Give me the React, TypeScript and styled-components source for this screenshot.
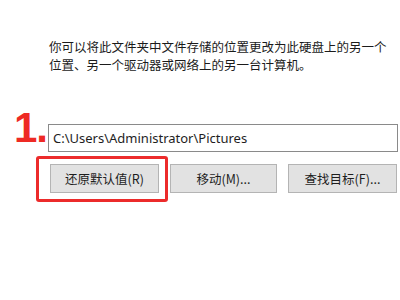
import React from "react";
import styled, { createGlobalStyle } from "styled-components";

const Global = createGlobalStyle`
  html, body { margin: 0; padding: 0; background: #ffffff; }
  body { width: 400px; height: 300px; overflow: hidden; }
`;

const Page = styled.div`
  width: 400px;
  height: 300px;
  box-sizing: border-box;
  padding: 38px 2px 0 0;
  font-family: "Noto Sans CJK SC", "Noto Sans", sans-serif;
  color: #1b1b1b;
`;

const Description = styled.p`
  margin: 0 0 0 49px;
  font-size: 12.5px;
  line-height: 18px;
  letter-spacing: 0;
`;

const Form = styled.div`
  display: grid;
  grid-template-columns: 48px 350px;
  row-gap: 12px;
  margin-top: 50px;
`;

const StepLabel = styled.div`
  display: flex;
  align-items: flex-start;
  justify-content: flex-end;
  padding-right: 1px;
  height: 25px;
  margin-top: -17px;
  color: #ee2a24;
  font-family: "Liberation Sans", "Noto Sans", sans-serif;
  font-weight: 700;
  font-size: 42px;
  line-height: 42px;
  letter-spacing: -1px;
`;

const PathInput = styled.div`
  box-sizing: border-box;
  height: 28px;
  border: 1.5px solid #8a8a8a;
  background: #fff;
  display: flex;
  align-items: center;
  padding-left: 4px;
  font-family: "Noto Sans", "Open Sans", sans-serif;
  font-size: 13px;
  color: #1e1e1e;
`;

const ButtonRow = styled.div`
  grid-column: 2;
  display: flex;
  gap: 11px;
  padding-left: 2px;
`;

const Highlight = styled.div`
  position: relative;
  &::before {
    content: "";
    position: absolute;
    top: -8px;
    left: -14px;
    right: -9px;
    bottom: -9px;
    border: 3px solid #ec2b2b;
    border-radius: 3px;
    pointer-events: none;
  }
`;

const Button = styled.button<{ $w: number }>`
  box-sizing: border-box;
  width: ${(p) => p.$w}px;
  height: 29px;
  margin: 0;
  padding: 0;
  border: 1.5px solid #b4b4b4;
  background: #e2e2e2;
  color: #1e1e1e;
  font-family: "Noto Sans CJK SC", "Noto Sans", sans-serif;
  font-size: 12.5px;
  display: flex;
  align-items: center;
  justify-content: center;
`;

export default function App() {
  return (
    <Page>
      <Global />
      <Description>
        你可以将此文件夹中文件存储的位置更改为此硬盘上的另一个
        <br />
        位置、另一个驱动器或网络上的另一台计算机。
      </Description>
      <Form>
        <StepLabel>1.</StepLabel>
        <PathInput>C:\Users\Administrator\Pictures</PathInput>
        <ButtonRow>
          <Highlight>
            <Button $w={109}>还原默认值(R)</Button>
          </Highlight>
          <Button $w={107}>移动(M)...</Button>
          <Button $w={109}>查找目标(F)...</Button>
        </ButtonRow>
      </Form>
    </Page>
  );
}
